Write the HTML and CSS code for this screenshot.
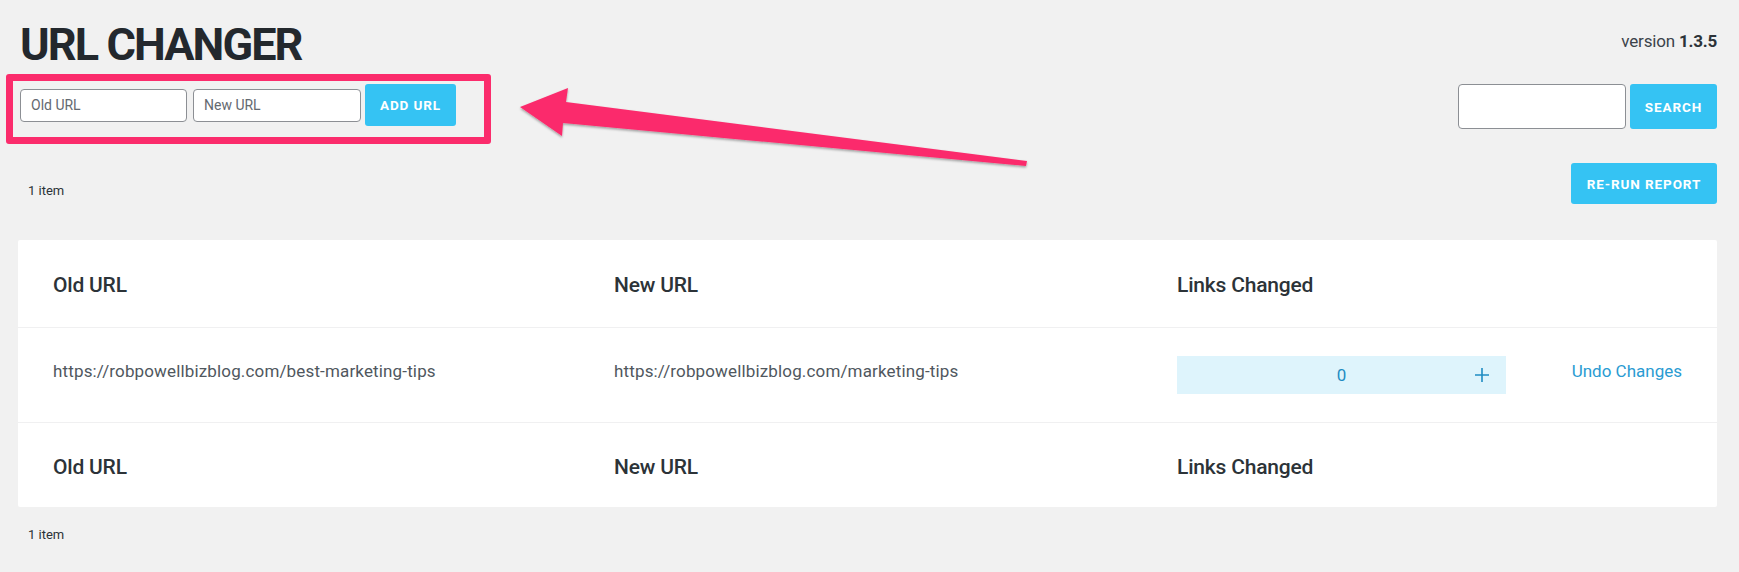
FILE: index.html
```html
<!DOCTYPE html>
<html lang="en">
<head>
<meta charset="utf-8">
<title>URL Changer</title>
<link rel="stylesheet" href="styles.css">
</head>
<body>
<div class="page">
  <header class="top">
    <h1 class="title">URL CHANGER</h1>
    <div class="version">version <strong>1.3.5</strong></div>
  </header>

  <div class="toolbar">
    <form class="add-form">
      <input class="field field-sm" type="text" placeholder="Old URL">
      <input class="field field-sm field-new" type="text" placeholder="New URL">
      <button class="btn btn-add" type="button">ADD URL</button>
      <span class="highlight-box" aria-hidden="true"></span>
    </form>
    <form class="search-form">
      <input class="field field-lg" type="text">
      <button class="btn btn-search" type="button">SEARCH</button>
    </form>
  </div>

  <div class="meta">
    <span class="count count-top">1 item</span>
    <button class="btn btn-rerun" type="button">RE-RUN REPORT</button>
  </div>

  <section class="card">
    <div class="row row-head">
      <div class="cell th">Old URL</div>
      <div class="cell th">New URL</div>
      <div class="cell th">Links Changed</div>
      <div class="cell"></div>
    </div>
    <div class="row row-body">
      <div class="cell td">https://robpowellbizblog.com/best-marketing-tips</div>
      <div class="cell td">https://robpowellbizblog.com/marketing-tips</div>
      <div class="cell">
        <div class="counter">
          <span class="counter-num">0</span>
          <svg class="counter-plus" width="16" height="16" viewBox="0 0 16 16"><path d="M8 1v14M1 8h14" stroke="#1f8cc2" stroke-width="1.6" fill="none"/></svg>
        </div>
      </div>
      <div class="cell td undo-cell"><a class="undo" href="#">Undo Changes</a></div>
    </div>
    <div class="row row-foot">
      <div class="cell th">Old URL</div>
      <div class="cell th">New URL</div>
      <div class="cell th">Links Changed</div>
      <div class="cell"></div>
    </div>
  </section>

  <div class="count count-bottom">1 item</div>

  <svg class="arrow" width="1739" height="200" viewBox="0 0 1739 200" aria-hidden="true">
    <defs>
      <filter id="sh" x="-10%" y="-50%" width="120%" height="200%">
        <feDropShadow dx="0" dy="1.5" stdDeviation="1.2" flood-color="#000" flood-opacity="0.35"/>
      </filter>
    </defs>
    <polygon filter="url(#sh)" fill="#fb2c6c" points="520,107 568,88 566,102 1027,161 1026,166 563,123 562,136"/>
  </svg>
</div>
</body>
</html>
```

FILE: styles.css
```css
* { box-sizing: border-box; }

html, body {
  margin: 0;
  padding: 0;
  background: #f1f1f1;
}

body {
  font-family: Roboto, "Liberation Sans", Arial, sans-serif;
  color: #2c3338;
}

.page {
  position: relative;
  padding: 22px 22px 0 18px;
  min-height: 572px;
}

.top {
  display: flex;
  justify-content: space-between;
  align-items: flex-start;
}

.title {
  margin: 0 0 0 2px;
  font-size: 45px;
  line-height: 46px;
  font-weight: 700;
  color: #23282d;
  letter-spacing: -1.9px;
}

.version {
  padding-top: 9px;
  font-size: 17px;
  line-height: 20px;
  color: #3c434a;
  letter-spacing: -0.2px;
}

.version strong { font-weight: 700; color: #2c3338; }

.toolbar {
  margin-top: 16px;
  display: flex;
  justify-content: space-between;
  align-items: flex-start;
}

.add-form {
  position: relative;
  display: flex;
  align-items: center;
  height: 42px;
  margin-left: 2px;
}

.search-form {
  display: flex;
  align-items: center;
  gap: 4px;
}

.field {
  font-family: inherit;
  font-size: 14px;
  color: #2c3338;
  background: #fff;
  border: 1px solid #8c8f94;
  border-radius: 4px;
  padding: 0 10px;
  outline: none;
}

.field::placeholder { color: #646970; }

.field-sm {
  width: 167px;
  height: 33px;
}

.field-new { margin-left: 6px; width: 168px; }

.field-lg {
  width: 168px;
  height: 45px;
}

.btn {
  font-family: inherit;
  font-weight: 700;
  font-size: 13.5px;
  letter-spacing: 0.9px;
  color: #fff;
  background: #35c3f3;
  border: 0;
  border-radius: 3px;
  cursor: pointer;
  padding: 0;
}

.btn-add {
  margin-left: 4px;
  width: 91px;
  height: 42px;
}

.btn-search {
  width: 87px;
  height: 45px;
}

.btn-rerun {
  width: 146px;
  height: 41px;
}

.highlight-box {
  position: absolute;
  left: -14px;
  top: -10px;
  width: 485px;
  height: 70px;
  border: 7px solid #fb2c6c;
  border-radius: 3px;
  pointer-events: none;
}

.meta {
  margin-top: 34px;
  display: flex;
  justify-content: space-between;
  align-items: flex-start;
}

.count {
  font-size: 13px;
  line-height: 16px;
  color: #2c3338;
  padding-left: 10px;
}

.count-top { padding-top: 20px; }

.card {
  margin-top: 36px;
  background: #fff;
  border-radius: 2px;
}

.row {
  display: grid;
  grid-template-columns: 561px 563px 329px 1fr;
  align-items: center;
  padding: 0 35px;
}

.row + .row { border-top: 1px solid #f0f0f1; }

.row-head { height: 87px; padding-top: 3px; }
.row-body { height: 95px; }
.row-foot { height: 85px; padding-top: 3px; }

.th {
  font-size: 21px;
  font-weight: 500;
  color: #2c3338;
  letter-spacing: -0.2px;
}

.td {
  font-size: 17px;
  color: #50575e;
  letter-spacing: 0.15px;
  padding-bottom: 9px;
}

.counter {
  position: relative;
  display: flex;
  align-items: center;
  justify-content: center;
  height: 38px;
  background: #def4fc;
}

.counter-num {
  font-size: 17px;
  color: #1f8cc2;
}

.counter-plus {
  position: absolute;
  right: 16px;
  top: 11px;
}

.undo-cell {
  justify-self: end;
}

.undo {
  font-size: 17px;
  letter-spacing: 0;
  color: #2a9bd2;
  text-decoration: none;
}

.count-bottom { margin-top: 20px; }

.arrow {
  position: absolute;
  left: 0;
  top: 0;
  pointer-events: none;
}
```
